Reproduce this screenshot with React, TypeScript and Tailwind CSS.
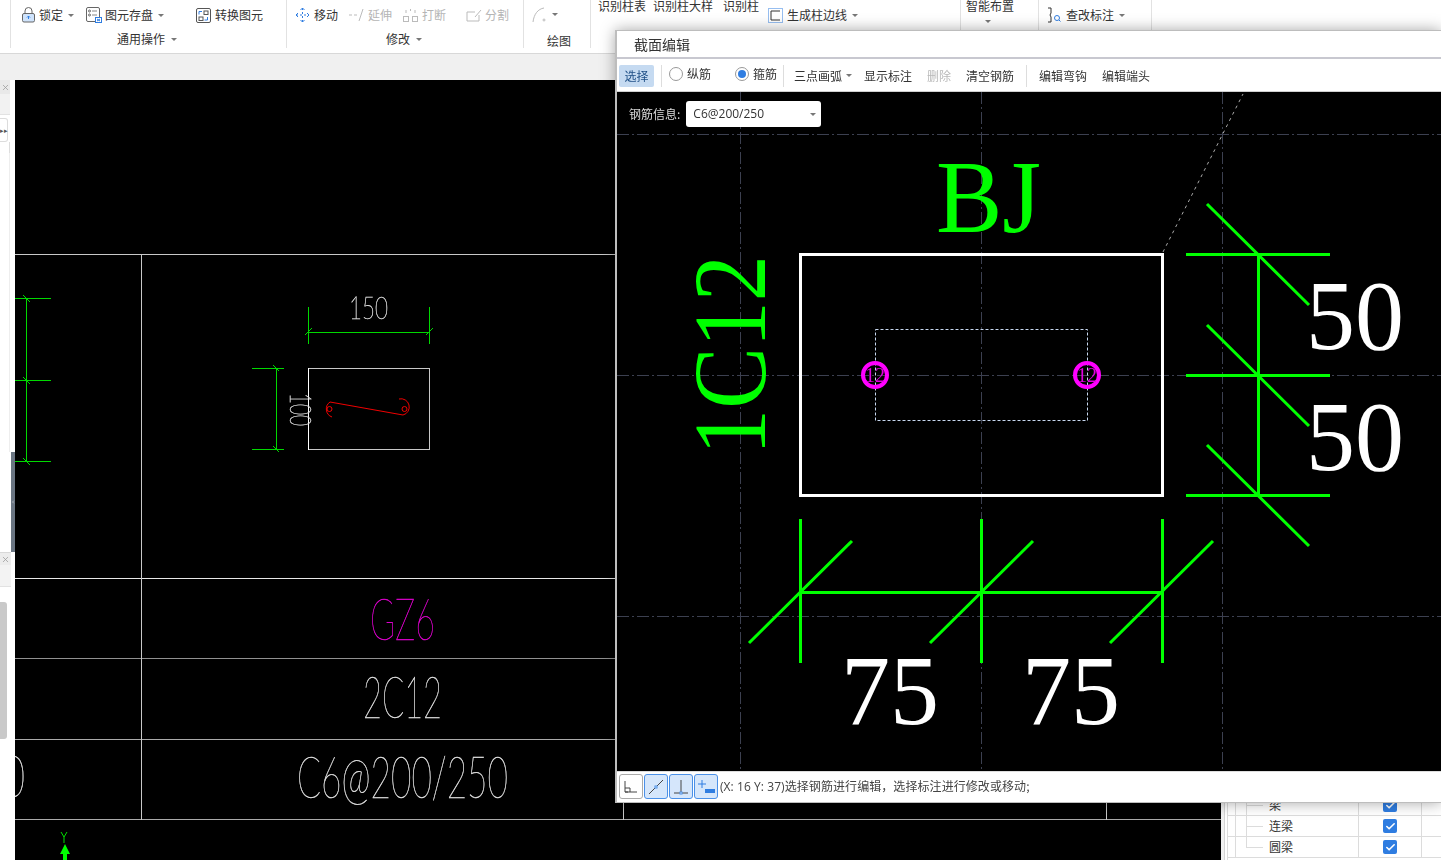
import { Check, ChevronLeft, X } from "lucide-react";

const cjk = "font-['Microsoft_YaHei','Noto_Sans_CJK_SC','Liberation_Sans',sans-serif]";

function Caret({ className = "" }: { className?: string }) {
  return <span className={`inline-block w-0 h-0 border-x-[3px] border-x-transparent border-t-[3px] border-t-[#777] ${className}`} />;
}

function ToolItem({ icon, label, caret, muted, className = "" }: { icon?: React.ReactNode; label: string; caret?: boolean; muted?: boolean; className?: string }) {
  return (
    <div className={`flex items-center h-4 shrink-0 whitespace-nowrap ${muted ? "text-[#b5b5b5]" : "text-[#333]"} ${className}`}>
      {icon}
      <span>{label}</span>
      {caret && <Caret className="ml-[5px]" />}
    </div>
  );
}

function LockIcon() {
  return (
    <svg width="15" height="16" viewBox="0 0 15 16" className="mr-[3px]" fill="none">
      <path d="M4 7V4a3.5 3.5 0 0 1 7 0v3" stroke="#666" />
      <rect x="1.5" y="6.5" width="12" height="8.5" rx="1.5" fill="#cfe3fb" stroke="#666" />
      <path d="M7.5 9v3M6 10.5l1.5-1.5 1.5 1.5" stroke="#2f7de1" />
    </svg>
  );
}

function SaveIcon() {
  return (
    <svg width="16" height="16" viewBox="0 0 16 16" className="mr-[3px]" fill="none">
      <rect x="0.5" y="0.5" width="13" height="14" rx="1.5" stroke="#666" />
      <circle cx="3.5" cy="4" r="1" stroke="#666" />
      <path d="M6 4h5M6 8h5" stroke="#888" />
      <circle cx="3.5" cy="8" r="1" stroke="#666" />
      <rect x="9.5" y="10.5" width="6" height="5" fill="#fff" stroke="#2f7de1" />
      <path d="M11 12l3 2M14 12l-3 2" stroke="#2f7de1" />
    </svg>
  );
}

function ConvertIcon() {
  return (
    <svg width="15" height="15" viewBox="0 0 15 15" className="mr-1" fill="none">
      <rect x="0.5" y="0.5" width="14" height="14" rx="1.5" stroke="#555" />
      <rect x="8" y="3" width="4" height="3.5" stroke="#555" />
      <rect x="3" y="9" width="4" height="3.5" stroke="#555" />
      <path d="M3 6.5V3.5h3M8.5 12h3V9" stroke="#2f7de1" />
    </svg>
  );
}

function MoveIcon() {
  return (
    <svg width="15" height="16" viewBox="0 0 15 16" className="mr-1" fill="none" stroke="#2f7de1">
      <path d="M7.5 1v14M1 8h13" strokeDasharray="2 2" />
      <path d="M5.5 3l2-2 2 2M5.5 13l2 2 2-2M3 6l-2 2 2 2M12 6l2 2-2 2" />
    </svg>
  );
}

function ExtendIcon() {
  return (
    <svg width="15" height="14" viewBox="0 0 15 14" className="mr-[4px]" fill="none" stroke="#bbb">
      <path d="M0 7h3M5 7h3M10 13l4-12" />
    </svg>
  );
}

function BreakIcon() {
  return (
    <svg width="15" height="14" viewBox="0 0 15 14" className="mr-[4px]" fill="none" stroke="#bbb">
      <rect x="0.5" y="8.5" width="5" height="5" />
      <rect x="9.5" y="8.5" width="5" height="5" />
      <path d="M3 5V2M12 5V2M7.5 1v2" />
    </svg>
  );
}

function SplitIcon() {
  return (
    <svg width="16" height="13" viewBox="0 0 16 13" className="mr-[3px]" fill="none" stroke="#bbb">
      <path d="M13 6v6H1V3h8M9 8l6-7" />
    </svg>
  );
}

function Toolbar() {
  return (
    <div className={`relative h-[54px] shrink-0 flex bg-white border-b border-[#d8d8d8] text-[12px] ${cjk}`}>
      <div className="w-[11px] h-[48px] border-r border-[#e2e2e2]" />

      <div className="w-[276px] h-[48px] border-r border-[#e2e2e2] flex flex-col">
        <div className="flex pl-[10px] pt-[7px]">
          <ToolItem icon={<LockIcon />} label="锁定" caret className="w-[65px]" />
          <ToolItem icon={<SaveIcon />} label="图元存盘" caret className="w-[110px]" />
          <ToolItem icon={<ConvertIcon />} label="转换图元" />
        </div>
        <div className="flex items-center justify-center h-4 mt-[8px] pr-[3px] text-[#333]">
          通用操作
          <Caret className="ml-[6px]" />
        </div>
      </div>

      <div className="w-[237px] h-[48px] border-r border-[#e2e2e2] flex flex-col">
        <div className="flex pl-[8px] pt-[7px]">
          <ToolItem icon={<MoveIcon />} label="移动" className="w-[54px]" />
          <ToolItem icon={<ExtendIcon />} label="延伸" muted className="w-[54px]" />
          <ToolItem icon={<BreakIcon />} label="打断" muted className="w-[63px]" />
          <ToolItem icon={<SplitIcon />} label="分割" muted />
        </div>
        <div className="flex items-center justify-center h-4 mt-[8px] pr-[2px] text-[#333]">
          修改
          <Caret className="ml-[6px]" />
        </div>
      </div>

      <div className="w-[67px] h-[48px] border-r border-[#e2e2e2] flex flex-col">
        <div className="flex items-center pl-[8px] pt-[6px] h-[24px]">
          <svg width="17" height="17" viewBox="0 0 17 17" fill="none" stroke="#bbb">
            <path d="M1 16C2 8 6 3 12 2" />
            <circle cx="12" cy="14" r="1" />
          </svg>
          <Caret className="ml-[3px]" />
        </div>
        <div className="text-center mt-[9px] pl-[4px] text-[#333]">绘图</div>
      </div>

      <div className="w-[370px] h-[48px] border-r border-[#e2e2e2] flex items-start pl-[7px] -mt-[3px]">
        <span className="w-[55px] text-[#333]">识别柱表</span>
        <span className="w-[70px] text-[#333]">识别柱大样</span>
        <span className="w-[45px] text-[#333]">识别柱</span>
        <div className="flex items-center text-[#333] mt-[9px]">
          <svg width="15" height="15" viewBox="0 0 15 15" className="mr-1" fill="none">
            <rect x="0.5" y="0.5" width="14" height="14" stroke="#2f7de1" strokeDasharray="1 1" />
            <path d="M12 3H3v9h9" stroke="#333" />
          </svg>
          生成柱边线
          <Caret className="ml-[5px]" />
        </div>
      </div>

      <div className="w-[78px] h-[48px] border-r border-[#e2e2e2] flex flex-col items-start pl-[5px] -mt-[3px] text-[#333]">
        <span>智能布置</span>
        <Caret className="ml-[19px] mt-[5px]" />
      </div>

      <div className="w-[113px] h-[48px] border-r border-[#e2e2e2] flex items-center pl-[8px] pb-[18px]">
        <ToolItem
          icon={
            <svg width="15" height="16" viewBox="0 0 15 16" className="mr-[4px]" fill="none">
              <path d="M1 1h3v5L3 8l1 2v5H1" stroke="#333" />
              <circle cx="10" cy="11" r="2.5" stroke="#2f7de1" />
              <path d="M12 13l1.5 1.5" stroke="#2f7de1" />
            </svg>
          }
          label="查改标注"
          caret
        />
      </div>
    </div>
  );
}

function LeftPanel() {
  return (
    <div className="w-[15px] shrink-0 flex flex-col bg-white">
      <div className="h-[14px] w-[10px] bg-[#e9e9e9] flex items-center justify-center">
        <X size={9} className="text-[#999]" />
      </div>
      <div className="h-[21px] w-[10px] bg-[#f2f2f2] border-b border-[#e2e2e2]" />
      <div className="mt-[3px] h-[24px] w-[8px] rounded-r-[3px] border border-l-0 border-[#dcdcdc] bg-white flex items-center text-[7px] leading-none text-[#555]">
        ▸▸
      </div>
      <div className="h-[11px] w-[10px] border-r border-[#ddd]" />
      <div className="h-[299px] w-[10px] border-r border-[#eee]" />
      <div className="flex-none h-[100px] flex justify-end">
        <div className="w-[4px] bg-[#6b7683] flex items-center justify-center">
          <ChevronLeft size={6} className="text-[#c8ccd2]" strokeWidth={4} />
        </div>
      </div>
      <div className="h-[13px] w-[11px] bg-[#ececec] border-t border-[#d8d8d8] flex items-center justify-center">
        <X size={9} className="text-[#999]" />
      </div>
      <div className="h-[22px] w-[11px] bg-[#f3f3f3] border-b border-[#e2e2e2]" />
      <div className="mt-[15px] h-[137px] w-[7px] rounded-r-[3px] bg-[#c9c9c9]" />
    </div>
  );
}

function RightRow({ label, last }: { label: string; last?: boolean }) {
  return (
    <div className="h-[21px] flex border-b border-[#dcdcdc] text-[12px] text-[#333]">
      <div className="w-[8px] border-r border-[#dcdcdc]" />
      <div className="w-[123px] border-r border-[#dcdcdc] flex items-center">
        {last ? (
          <div className="ml-[10px] w-[17px] h-[11px] self-start border-l border-b border-[#dcdcdc]" />
        ) : (
          <div className="ml-[10px] w-[17px] h-full border-l border-[#dcdcdc] flex items-center">
            <div className="w-full h-0 border-t border-[#dcdcdc]" />
          </div>
        )}
        <span className="ml-[6px]">{label}</span>
      </div>
      <div className="w-[63px] border-r border-[#dcdcdc] flex items-center justify-center">
        <div className="w-[14px] h-[14px] rounded-[2px] bg-[#2f7de1] flex items-center justify-center">
          <Check size={11} strokeWidth={3.5} className="text-white" />
        </div>
      </div>
    </div>
  );
}

function RightPanel() {
  return (
    <div className={`w-[220px] shrink-0 flex bg-white overflow-hidden ${cjk}`}>
      <div className="w-[4px] bg-[#f0f0f0] border-r border-[#d4d4d4]" />
      <div className="w-[3px] border-r border-[#dcdcdc]" />
      <div className="flex-1 flex flex-col justify-end pb-[2px]">
        <RightRow label="梁" />
        <RightRow label="连梁" />
        <RightRow label="圆梁" last />
      </div>
    </div>
  );
}

function MainDrawing() {
  const cad = "font-['Lato','Liberation_Sans',sans-serif]";
  return (
    <svg viewBox="15 80 1206 780" className="block w-[1206px] h-[780px] shrink-0 bg-black">
      <g stroke="#c8c8c8" strokeWidth="1" fill="none" shapeRendering="crispEdges">
        <path d="M15 254.5H640" />
        <path d="M15 578.5H640" stroke="#e8e8e8" />
        <path d="M15 658.5H640" stroke="#909090" />
        <path d="M15 739.5H640" stroke="#aaa" />
        <path d="M15 819.5H1221" stroke="#aaa" />
        <path d="M141.5 254V820" />
        <path d="M623.5 800V820M1106.5 800V820" />
      </g>
      <g stroke="#00d800" strokeWidth="1" fill="none">
        <path d="M26.5 298V461M15 298.5H51M15 380.5H51M15 461.5H51" />
        <path d="M23 295l7 7M23 377l7 7M23 458l7 7" />
        <path d="M308.5 307V344M429.5 307V344M308 332.5H430" />
        <path d="M305 335l7-7M426 335l7-7" />
        <path d="M252 368.5H284M252 449.5H284M276.5 368V450" />
        <path d="M273 365l6 6M273 446l6 6" />
      </g>
      <rect x="308.5" y="368.5" width="121" height="81" fill="none" stroke="#c8c8c8" />
      <path d="M308.5 368V450" stroke="#fff" />
      <g fill="none" stroke="#f00000" strokeWidth="1">
        <path d="M332 417A8.5 8.5 0 0 1 330 402L403 415A8 8 0 0 0 399 399" />
        <circle cx="329.5" cy="409" r="2.5" />
        <circle cx="404.5" cy="409" r="2.5" />
      </g>
      <g className={`${cad} opacity-[0.99]`} fontWeight="100" fill="#e0e0e0" stroke="#e0e0e0" strokeWidth="0.5">
        <text x="349" y="319" fontSize="31" textLength="39" lengthAdjust="spacingAndGlyphs">150</text>
        <text transform="translate(290 393) rotate(90)" fontSize="29" textLength="33" lengthAdjust="spacingAndGlyphs">100</text>
        <text x="370" y="640" fontSize="58" fill="#e000d0" stroke="#e000d0" textLength="65" lengthAdjust="spacingAndGlyphs">GZ6</text>
        <text x="363" y="718" fontSize="58" textLength="79" lengthAdjust="spacingAndGlyphs">2C12</text>
        <text x="297" y="798" fontSize="58" textLength="211" lengthAdjust="spacingAndGlyphs">C6@200/250</text>
        <text x="2" y="797" fontSize="58" textLength="23" lengthAdjust="spacingAndGlyphs">0</text>
      </g>
      <g>
        <path d="M61 832l3 5 3-5M64 837v6" stroke="#00e000" fill="none" />
        <path d="M65 844l5 10h-3v6h-4v-6h-3z" fill="#00ff00" />
      </g>
    </svg>
  );
}

function SectionDrawing() {
  const serif = "font-['Liberation_Serif',serif]";
  return (
    <svg viewBox="617 92 824 679" className="block w-full h-full bg-black">
      <g stroke="#3c4050" strokeWidth="1" strokeDasharray="12 3 2 3" fill="none">
        <path d="M617 134.5H1441M617 375.5H1441M617 616.5H1441" />
        <path d="M740.5 92V771M981.5 92V771M1222.5 92V771" />
      </g>
      <path d="M1163 252L1243 94" stroke="#aaa" strokeDasharray="3 4" fill="none" />
      <rect x="800.5" y="254.5" width="362" height="241" fill="none" stroke="#fff" strokeWidth="3" />
      <rect x="875.5" y="329.5" width="212" height="91" fill="none" stroke="#c8d8f0" strokeDasharray="3 2" />
      <g stroke="#00ff00" strokeWidth="3" fill="none">
        <path d="M1186 254.5H1330M1186 375.5H1330M1186 495.5H1330M1258.5 254V496" />
        <path d="M1207 204L1309 305M1207 325L1309 426M1207 445L1309 546" />
        <path d="M800.5 519V663M981.5 519V663M1162.5 519V663M800 592.5H1163" />
        <path d="M749 643L852 541M930 643L1033 541M1110 643L1213 541" />
      </g>
      <g stroke="#ff00ff" strokeWidth="4" fill="none">
        <circle cx="875" cy="375" r="12" />
        <circle cx="1087" cy="375" r="12" />
      </g>
      <g className={serif} fontSize="20" fill="#e000e0">
        <text x="865" y="382" textLength="20" lengthAdjust="spacingAndGlyphs">12</text>
        <text x="1077" y="382" textLength="20" lengthAdjust="spacingAndGlyphs">12</text>
      </g>
      <g className={serif} fontSize="100" fill="#fff">
        <text x="1306" y="349" textLength="98" lengthAdjust="spacingAndGlyphs">50</text>
        <text x="1306" y="470" textLength="98" lengthAdjust="spacingAndGlyphs">50</text>
        <text x="841" y="724" textLength="98" lengthAdjust="spacingAndGlyphs">75</text>
        <text x="1022" y="724" textLength="98" lengthAdjust="spacingAndGlyphs">75</text>
      </g>
      <g className={serif} fontSize="104" fill="#00ff00">
        <text x="936" y="232" textLength="105" lengthAdjust="spacingAndGlyphs">BJ</text>
        <text transform="translate(765 455) rotate(-90)" textLength="200" lengthAdjust="spacingAndGlyphs">1C12</text>
      </g>
    </svg>
  );
}

function Radio({ checked, label, className = "" }: { checked?: boolean; label: string; className?: string }) {
  return (
    <div className={`flex items-center gap-[4px] -translate-y-[2px] ${className}`}>
      <span className="w-[14px] h-[14px] rounded-full border border-[#999] bg-white flex items-center justify-center">
        {checked && <span className="w-[8px] h-[8px] rounded-full bg-[#2f7de1]" />}
      </span>
      {label}
    </div>
  );
}

function ModeButton({ active, children }: { active?: boolean; children: React.ReactNode }) {
  return (
    <div className={`w-[24px] h-[25px] rounded-[3px] border flex items-center justify-center ${active ? "border-[#4a90e8] bg-[#d5e6fb]" : "border-[#aaa] bg-white"}`}>
      <svg width="20" height="20" viewBox="0 0 20 20" fill="none" stroke="#444">
        {children}
      </svg>
    </div>
  );
}

function SectionDialog() {
  return (
    <div className={`absolute left-[615px] top-[30px] right-0 h-[773px] flex flex-col bg-white border-l-2 border-y border-[#bdbdbd] shadow-[0_0_14px_rgba(0,0,0,0.35)] text-[12px] text-[#333] ${cjk}`}>
      <div className="h-[26px] shrink-0 flex items-center pl-[17px] text-[14px]">截面编辑</div>
      <div className="h-[35px] shrink-0 flex items-center border-t-2 border-b border-t-[#c8c8d0] border-b-[#cfcfcf] pl-[2px] pt-[1px] whitespace-nowrap">
        <div className="w-[35px] h-[22px] rounded-[2px] bg-[#c5daf1] text-[#1f4f86] flex items-center justify-center">选择</div>
        <div className="w-px h-[22px] bg-[#ddd] ml-[7px]" />
        <Radio label="纵筋" className="ml-[7px] w-[66px]" />
        <Radio checked label="箍筋" />
        <div className="w-px h-[22px] bg-[#ddd] ml-[6px]" />
        <div className="flex items-center ml-[10px] text-[#333]">
          三点画弧
          <Caret className="ml-[4px]" />
        </div>
        <span className="ml-[12px]">显示标注</span>
        <span className="ml-[15px] text-[#b8b8b8]">删除</span>
        <span className="ml-[15px]">清空钢筋</span>
        <div className="w-px h-[22px] bg-[#ddd] ml-[12px]" />
        <span className="ml-[12px]">编辑弯钩</span>
        <span className="ml-[15px]">编辑端头</span>
      </div>
      <div className="relative flex-1 min-h-0">
        <SectionDrawing />
        <div className="absolute left-[12px] top-[9px] flex items-center gap-[6px] text-[#ddd]">
          钢筋信息:
          <div className="w-[135px] h-[26px] rounded-[3px] bg-white text-[#333] flex items-center justify-between pl-[7px] pr-[5px] font-['Open_Sans','Noto_Sans_CJK_SC',sans-serif]">
            C6@200/250
            <Caret />
          </div>
        </div>
      </div>
      <div className="h-[31px] shrink-0 flex items-center pl-[2px] pb-[1px] gap-[1px] border-t border-[#ddd] bg-white">
        <ModeButton>
          <path d="M4 4v11h3M4 15h12M4 11h5v4" />
        </ModeButton>
        <ModeButton active>
          <path d="M3 17L17 3" />
          <rect x="9" y="9" width="2" height="2" stroke="#4a90e8" fill="#fff" />
        </ModeButton>
        <ModeButton active>
          <path d="M10 3v13M3 16h14" />
          <rect x="9" y="15" width="2" height="2" stroke="#4a90e8" fill="#fff" />
        </ModeButton>
        <ModeButton active>
          <path d="M6 3v8M2 7h8" stroke="#2f7de1" />
          <rect x="9" y="12" width="10" height="4" fill="#2f7de1" stroke="none" />
        </ModeButton>
        <span className="ml-[1px] text-[#444] tracking-[0.07px]">
          <span className="font-['Open_Sans',sans-serif]">(X: 16 Y: 37)</span>选择钢筋进行编辑，选择标注进行修改或移动;
        </span>
      </div>
    </div>
  );
}

export default function App() {
  return (
    <div className="relative w-[1441px] h-[860px] overflow-hidden flex flex-col bg-[#f0f0f0]">
      <Toolbar />
      <div className="h-[26px] shrink-0" />
      <div className="flex-1 min-h-0 flex">
        <LeftPanel />
        <MainDrawing />
        <RightPanel />
      </div>
      <SectionDialog />
    </div>
  );
}
